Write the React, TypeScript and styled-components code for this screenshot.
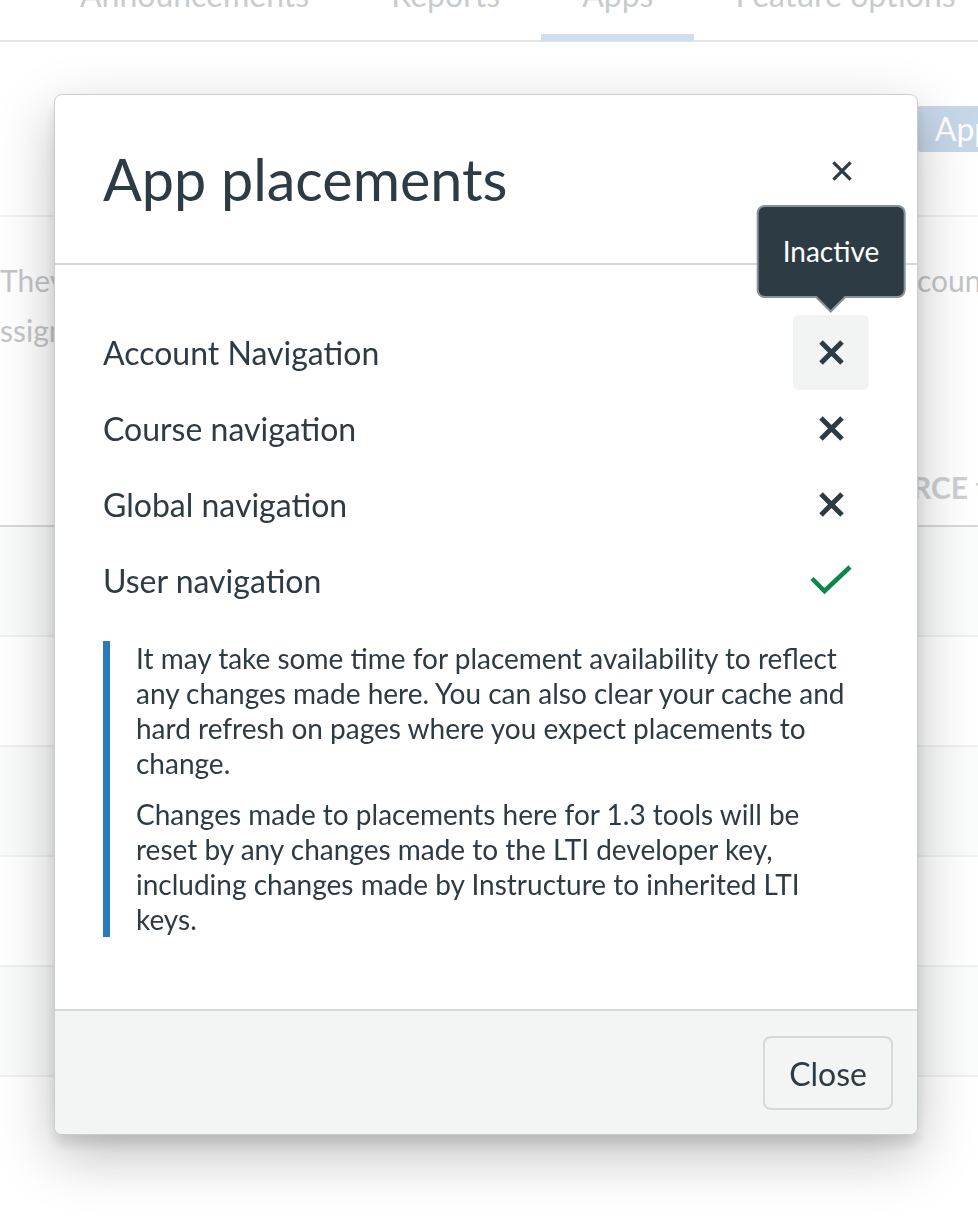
import React from 'react'
import styled, { createGlobalStyle } from 'styled-components'

const GlobalStyle = createGlobalStyle`
  html, body {
    margin: 0;
    padding: 0;
    background: #ffffff;
    overflow: hidden;
  }
  body {
    font-family: Lato, "Noto Sans", "Liberation Sans", sans-serif;
    color: #2d3b45;
  }
  * {
    box-sizing: border-box;
  }
`

// ---- faded page behind the modal ----

const Page = styled.div`
  width: 978px;
  height: 1230px;
  overflow: hidden;
  color: #c5c8cb;
`

const TabBar = styled.div`
  display: flex;
  margin: -23px 0 0 -148px;
  border-bottom: 2px solid #e3e5e7;
  white-space: nowrap;
`

const Tab = styled.div<{ $active?: boolean }>`
  font-size: 32px;
  line-height: 35px;
  padding: 0 41px 22px;
  margin-bottom: -1px;
  border-bottom: 7px solid ${({ $active }) => ($active ? '#d0ddec' : 'transparent')};
  color: #c9cccf;
`

const Toolbar = styled.div`
  display: flex;
  justify-content: flex-end;
  padding: 64px 0 63px;
  border-bottom: 2px solid #f0f1f2;
`

const AddButton = styled.div`
  height: 46px;
  line-height: 46px;
  padding: 0 18px;
  margin-right: -136px;
  background: #c7d7ea;
  color: #ffffff;
  font-size: 32px;
  border-radius: 4px;
  white-space: nowrap;
`

const Intro = styled.div`
  padding-top: 38px;
  font-size: 30px;
  line-height: 50px;
  color: #c3c6c9;
`

const IntroLine = styled.div`
  display: flex;
  justify-content: space-between;
  white-space: nowrap;
  margin-right: -14px;
`

const TableHead = styled.div`
  display: grid;
  grid-template-columns: 352px 460px auto;
  padding: 115px 0 21px 100px;
  border-bottom: 2px solid #d7d9db;
  font-size: 30px;
  line-height: 34px;
  font-weight: 700;
  color: #cdd0d2;
  white-space: nowrap;
`

const TableRow = styled.div<{ $odd?: boolean }>`
  height: 110px;
  border-bottom: 2px solid #eff0f1;
  background: ${({ $odd }) => ($odd ? '#fafbfb' : '#ffffff')};
`

// ---- modal ----

const Overlay = styled.div`
  position: fixed;
  inset: 0;
  display: flex;
  align-items: flex-start;
  padding: 94px 0 0 54px;
`

const Modal = styled.div`
  width: 864px;
  background: #ffffff;
  border: 1px solid #c7cdd1;
  border-radius: 8px;
  overflow: hidden;
  box-shadow: 0 10px 12px rgba(0, 0, 0, 0.1), 0 20px 56px rgba(0, 0, 0, 0.25);
`

const Header = styled.div`
  position: relative;
  padding: 48px;
  border-bottom: 2px solid #d5d9dc;
`

const Title = styled.h2`
  margin: 0;
  font-size: 57.5px;
  line-height: 72px;
  font-weight: 400;
  color: #2d3b45;
`

const CloseX = styled.button`
  position: absolute;
  top: 54px;
  right: 53px;
  width: 44px;
  height: 44px;
  padding: 0;
  border: none;
  background: transparent;
  display: flex;
  align-items: center;
  justify-content: center;
  color: #2d3b45;
`

const Body = styled.div`
  padding: 49px 48px 72px;
`

const PlacementList = styled.div`
  display: flex;
  flex-direction: column;
`

const PlacementRow = styled.div`
  height: 76px;
  display: flex;
  align-items: center;
  justify-content: space-between;
`

const Label = styled.span`
  font-size: 32px;
  color: #2d3b45;
`

const StatusBox = styled.div<{ $highlighted?: boolean }>`
  position: relative;
  width: 76px;
  height: 75px;
  border-radius: 6px;
  display: flex;
  align-items: center;
  justify-content: center;
  background: ${({ $highlighted }) => ($highlighted ? '#f2f4f4' : 'transparent')};
`

const Tooltip = styled.div`
  position: absolute;
  bottom: calc(100% + 17px);
  left: 50%;
  transform: translateX(-50%);
  padding: 0 24px;
  height: 93px;
  line-height: 89px;
  background: #2d3b45;
  border: 2px solid #87939c;
  border-radius: 8px;
  color: #ffffff;
  font-size: 28px;
  white-space: nowrap;

  &::before,
  &::after {
    content: '';
    position: absolute;
    left: 50%;
    transform: translateX(-50%);
    width: 0;
    height: 0;
    border-style: solid;
  }
  &::before {
    top: 100%;
    border-width: 17px 17px 0;
    border-color: #87939c transparent transparent;
  }
  &::after {
    top: calc(100% - 1px);
    border-width: 15px 15px 0;
    border-color: #2d3b45 transparent transparent;
  }
`

const Alert = styled.div`
  margin: 23px 24px 0 0;
  border-left: 7px solid #2b7abc;
  padding-left: 26px;
  font-size: 28px;
  line-height: 35px;
  color: #2d3b45;
`

const AlertText = styled.p`
  margin: 0 0 16px;
  &:last-child {
    margin-bottom: 0;
  }
`

const Footer = styled.div`
  display: flex;
  justify-content: flex-end;
  padding: 25px 24px 24px;
  background: #f3f4f4;
  border-top: 2px solid #d5d9dc;
`

const Button = styled.button`
  height: 74px;
  padding: 0 24px;
  font-family: Lato, "Noto Sans", sans-serif;
  font-size: 32px;
  color: #2d3b45;
  background: #f3f4f4;
  border: 2px solid #d5d9dc;
  border-radius: 8px;
`

const XIcon = ({ size = 27, stroke = 5 }: { size?: number; stroke?: number }) => (
  <svg width={size} height={size} viewBox="0 0 27 27" fill="none">
    <path d="M3 3 L24 24 M24 3 L3 24" stroke="#2d3b45" strokeWidth={stroke} />
  </svg>
)

const CheckIcon = () => (
  <svg width="42" height="30" viewBox="0 0 42 30" fill="none">
    <path d="M2 13.5 L14.5 26 L40 2" stroke="#0b874b" strokeWidth="4.5" />
  </svg>
)

const tabs = ['Admins', 'Announcements', 'Reports', 'Apps', 'Feature options', 'Integrations']

const placements = [
  { name: 'Account Navigation', enabled: false, hover: true },
  { name: 'Course navigation', enabled: false },
  { name: 'Global navigation', enabled: false },
  { name: 'User navigation', enabled: true },
]

export default function App() {
  return (
    <>
      <GlobalStyle />
      <Page>
        <TabBar>
          {tabs.map((t) => (
            <Tab key={t} $active={t === 'Apps'}>
              {t}
            </Tab>
          ))}
        </TabBar>
        <Toolbar>
          <AddButton>App Center</AddButton>
        </Toolbar>
        <Intro>
          <IntroLine>
            <span>They are installed for this</span>
            <span>account</span>
          </IntroLine>
          <IntroLine>
            <span>ssigned to courses and users below.</span>
          </IntroLine>
        </Intro>
        <TableHead>
          <span>Name</span>
          <span>Status</span>
          <span>RCE favorites</span>
        </TableHead>
        {[0, 1, 2, 3, 4].map((i) => (
          <TableRow key={i} $odd={i % 2 === 0} />
        ))}
      </Page>

      <Overlay>
        <Modal role="dialog" aria-label="App placements">
          <Header>
            <Title>App placements</Title>
            <CloseX aria-label="Close">
              <XIcon size={22} stroke={4} />
            </CloseX>
          </Header>
          <Body>
            <PlacementList>
              {placements.map((p) => (
                <PlacementRow key={p.name}>
                  <Label>{p.name}</Label>
                  <StatusBox $highlighted={p.hover}>
                    {p.hover && <Tooltip>Inactive</Tooltip>}
                    {p.enabled ? <CheckIcon /> : <XIcon />}
                  </StatusBox>
                </PlacementRow>
              ))}
            </PlacementList>
            <Alert>
              <AlertText>
                It may take some time for placement availability to reflect any changes made here. You can also
                clear your cache and hard refresh on pages where you expect placements to change.
              </AlertText>
              <AlertText>
                Changes made to placements here for 1.3 tools will be reset by any changes made to the LTI developer
                key, including changes made by Instructure to inherited LTI keys.
              </AlertText>
            </Alert>
          </Body>
          <Footer>
            <Button>Close</Button>
          </Footer>
        </Modal>
      </Overlay>
    </>
  )
}
